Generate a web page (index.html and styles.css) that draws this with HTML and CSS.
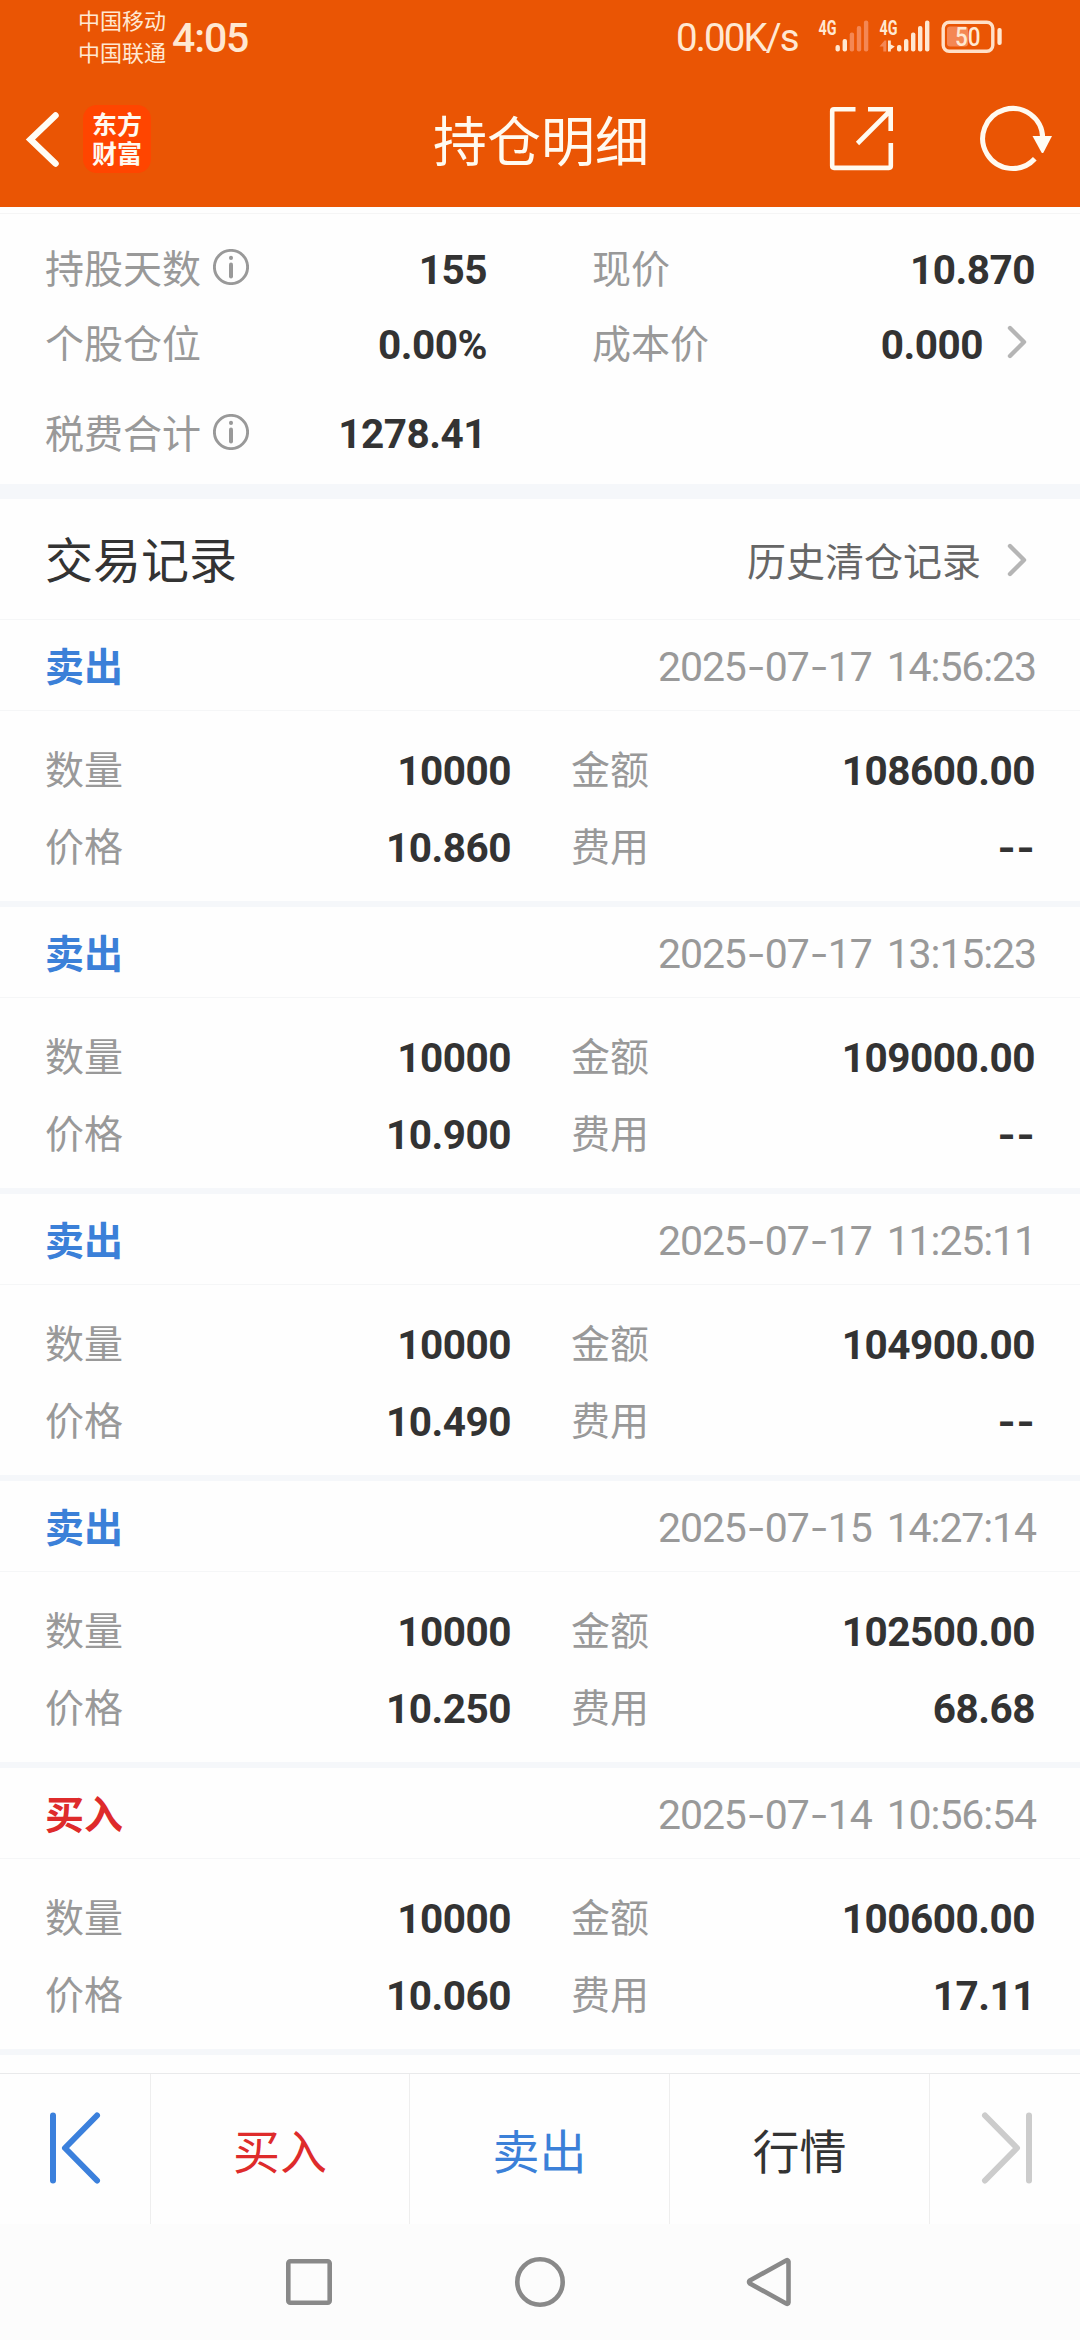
FILE: index.html
```html
<!DOCTYPE html>
<html lang="zh-CN">
<head>
<meta charset="utf-8">
<title>持仓明细</title>
<link rel="stylesheet" href="styles.css">
</head>
<body>
<div class="screen">
  <header class="top">
    <div class="status">
      <div class="carriers"><span>中国移动</span><span>中国联通</span></div>
      <span class="clock">4:05</span>
      <span class="speed">0.00K/s</span>
      <svg class="signals" width="196" height="40" viewBox="812 16 196 40">
        <g class="net"><text x="818.5" y="34.5" textLength="18" lengthAdjust="spacingAndGlyphs">4G</text><text x="879.5" y="34.5" textLength="18" lengthAdjust="spacingAndGlyphs">4G</text></g>
        <g class="on">
          <rect x="835.5" y="45" width="4.4" height="6.5" rx="2"/><rect x="842.6" y="39" width="4.4" height="12.5" rx="2"/>
          <rect x="897" y="45" width="4.4" height="6.5" rx="2"/><rect x="904" y="39" width="4.4" height="12.5" rx="2"/>
          <rect x="911" y="32.5" width="4.4" height="19" rx="2"/><rect x="918" y="26" width="4.4" height="25.5" rx="2"/><rect x="925" y="20.5" width="4.4" height="31" rx="2"/>
          <path d="M888 40.500h2.800v4l4 2-4 3v2h-2.800z"/>
        </g>
        <g class="off">
          <rect x="849.700" y="32.500" width="4.400" height="19" rx="2"/><rect x="856.800" y="26" width="4.400" height="25.500" rx="2"/><rect x="863.900" y="20.500" width="4.400" height="31" rx="2"/>
          <path d="M886.300 51.500h-3v-5h-3.800l5-6h1.800z"/>
          <rect x="947" y="26.500" width="21" height="20" rx="3"/>
        </g>
        <rect class="shell" x="943.200" y="22.200" width="49.600" height="29" rx="6"/>
        <rect class="on" x="997.400" y="28" width="4.300" height="17" rx="2"/>
        <text class="pct" x="955" y="46" textLength="25.500" lengthAdjust="spacingAndGlyphs">50</text>
      </svg>
    </div>
    <div class="bar">
      <svg class="back" width="40" height="64" viewBox="22 107 40 64"><path d="M55.500 115.500 30.500 139.500 55.500 163.500"/></svg>
      <div class="logo">东方财富</div>
      <h1>持仓明细</h1>
      <svg class="share" width="70" height="70" viewBox="825 105 70 70"><path d="M853.500 110.300H832q-1.800 0-1.800 1.800v55q0 1.800 1.800 1.800h55q1.800 0 1.800-1.800V144M866 110.300h22.700V132M855.500 144.500 888 112"/></svg>
      <svg class="reload" width="78" height="70" viewBox="976 104 78 70"><path class="arc" d="M1040.700 138A30 30 0 1 0 1032.800 158.800"/><path class="tip" d="M1030.500 136h19.500l-8.500 16.500q-1 1.200-2 0z"/></svg>
    </div>
  </header>

  <section class="summary">
    <div class="sum-row r1"><span class="label">持股天数</span><svg class="info" width="36" height="36" viewBox="0 0 36 36"><circle cx="18" cy="18" r="16.600"/><path d="M18 15.500v12"/><path d="M18 8.800v.1"/></svg><b class="num">155</b><span class="label second">现价</span><b class="num last">10.870</b></div>
    <div class="sum-row r2"><span class="label">个股仓位</span><b class="num">0.00%</b><span class="label second">成本价</span><b class="num last">0.000</b><svg class="chev" width="26" height="36" viewBox="0 0 26 36"><path d="M4 4 18 18 4 32"/></svg></div>
    <div class="sum-row r3"><span class="label">税费合计</span><svg class="info" width="36" height="36" viewBox="0 0 36 36"><circle cx="18" cy="18" r="16.600"/><path d="M18 15.500v12"/><path d="M18 8.800v.1"/></svg><b class="num">1278.41</b></div>
  </section>

  <div class="records-head"><h2>交易记录</h2><span class="history">历史清仓记录</span><svg class="chev" width="26" height="36" viewBox="0 0 26 36"><path d="M4 4 18 18 4 32"/></svg></div>

  <main class="records">
    <article class="record">
      <div class="record-head"><span class="side sell">卖出</span><time>2025<i>-</i>07<i>-</i>17 14:56:23</time></div>
      <div class="grid"><span class="label">数量</span><b class="num">10000</b><span class="label">金额</span><b class="num">108600.00</b><span class="label">价格</span><b class="num">10.860</b><span class="label">费用</span><b class="num dash"><i>-</i><i>-</i></b></div>
    </article>
    <article class="record">
      <div class="record-head"><span class="side sell">卖出</span><time>2025<i>-</i>07<i>-</i>17 13:15:23</time></div>
      <div class="grid"><span class="label">数量</span><b class="num">10000</b><span class="label">金额</span><b class="num">109000.00</b><span class="label">价格</span><b class="num">10.900</b><span class="label">费用</span><b class="num dash"><i>-</i><i>-</i></b></div>
    </article>
    <article class="record">
      <div class="record-head"><span class="side sell">卖出</span><time>2025<i>-</i>07<i>-</i>17 11:25:11</time></div>
      <div class="grid"><span class="label">数量</span><b class="num">10000</b><span class="label">金额</span><b class="num">104900.00</b><span class="label">价格</span><b class="num">10.490</b><span class="label">费用</span><b class="num dash"><i>-</i><i>-</i></b></div>
    </article>
    <article class="record">
      <div class="record-head"><span class="side sell">卖出</span><time>2025<i>-</i>07<i>-</i>15 14:27:14</time></div>
      <div class="grid"><span class="label">数量</span><b class="num">10000</b><span class="label">金额</span><b class="num">102500.00</b><span class="label">价格</span><b class="num">10.250</b><span class="label">费用</span><b class="num">68.68</b></div>
    </article>
    <article class="record">
      <div class="record-head"><span class="side buy">买入</span><time>2025<i>-</i>07<i>-</i>14 10:56:54</time></div>
      <div class="grid"><span class="label">数量</span><b class="num">10000</b><span class="label">金额</span><b class="num">100600.00</b><span class="label">价格</span><b class="num">10.060</b><span class="label">费用</span><b class="num">17.11</b></div>
    </article>
  </main>

  <nav class="actions">
    <span class="cell first"><svg width="60" height="80" viewBox="0 0 60 80"><path d="M8 7.500v65M52 7.500 20 40 52 72.500"/></svg></span>
    <span class="cell buy">买入</span>
    <span class="cell sell">卖出</span>
    <span class="cell quote">行情</span>
    <span class="cell next"><svg width="60" height="80" viewBox="0 0 60 80"><path d="M52 7.500v65M8 7.500 40 40 8 72.500"/></svg></span>
  </nav>

  <footer class="system">
    <svg width="50" height="54" viewBox="0 0 50 54"><rect x="4.300" y="6.300" width="41.400" height="41.400" rx="2"/></svg>
    <svg width="54" height="54" viewBox="0 0 54 54"><circle cx="27" cy="27" r="22.700"/></svg>
    <svg width="50" height="54" viewBox="0 0 50 54"><path d="M44.500 6.500v41q-.3 2-2.400 1L6 28.600q-2-1.600 0-3.200L42.100 5.500q2.100-1 2.400 1z"/></svg>
  </footer>
</div>
</body>
</html>
```
FILE: styles.css
```css
* { box-sizing: border-box; margin: 0; padding: 0; }
body { background: #fff; }
svg { display: block; flex: none; fill: none; }

.screen {
  width: 1080px;
  height: 2340px;
  display: flex;
  flex-direction: column;
  overflow: hidden;
  background: #fefefe;
  color: #333;
  font-family: "Noto Sans CJK SC", sans-serif;
}

/* Header */
.top { height: 207px; background: #ea5504; color: #fffaf0; flex: none; }
.status { height: 76px; display: flex; align-items: center; padding-left: 78px; color: #ffe8d2; }
.carriers { width: 92px; display: flex; flex-direction: column; font-size: 22px; line-height: 32px; margin-top: -6px; }
.clock { width: 504px; padding-left: 2px; font: 500 41px/44px Roboto, sans-serif; letter-spacing: -1.1px; }
.speed { width: 138px; padding-left: 2px; font: 38.5px/44px Roboto, sans-serif; letter-spacing: -1.9px; white-space: nowrap; }
.signals { margin-top: -4px; }
.net text { font: 700 20px Roboto, sans-serif; fill: #ffe8d2; }
.on { fill: #ffe8d2; }
.off { fill: #f69063; opacity: .85; }
.shell { stroke: #ffe0c8; stroke-width: 3.4; }
.pct { font: 500 25px Roboto, sans-serif; fill: #ffe8d2; }

.bar { height: 126px; display: flex; align-items: center; padding-left: 22px; }
.back { stroke: #fffdf5; stroke-width: 6.5; stroke-linecap: round; stroke-linejoin: miter; }
.logo {
  width: 68px; height: 68px; margin-left: 21px; padding: 4px 9px; border-radius: 14px;
  background: #ff4500; font-size: 25px; line-height: 28.5px; font-weight: 700;
}
.bar h1 { width: 217px; margin-left: 282px; font-size: 54px; line-height: 64px; font-weight: 400; color: #fffaf0; white-space: nowrap; }
.share { margin-left: 177px; stroke: #fffaf0; stroke-width: 4.6; }
.reload { margin-left: 81px; }
.arc { stroke: #fffaf0; stroke-width: 5; }
.tip { fill: #fffdf5; }

/* Shared text */
.label { font-size: 39px; line-height: 44px; color: #999; margin-top: -7px; font-weight: 400; white-space: nowrap; }
.num { font: 700 40.5px/44px Roboto, sans-serif; letter-spacing: -.5px; text-align: right; color: #333; }
.chev { stroke: #b5b5b5; stroke-width: 4.4; stroke-linecap: round; stroke-linejoin: round; }
.sell { color: #3b80d8; }
.buy { color: #de2b2b; }

/* Summary */
.summary { height: 292px; padding: 6px 0 0; border-bottom: 15px solid #f5f7fa; flex: none; }
.sum-row { display: grid; grid-template-columns: 168px 60px 214px 105px 391px 52px; align-items: center; padding-left: 45px; height: 75px; }
.r1 { height: 94px; padding-top: 18px; border-top: 1px solid #f5f5f5; }
.r3 { height: 104px; }
.sum-row .label { grid-column: 1; grid-row: 1; }
.info { grid-column: 2; grid-row: 1; stroke: #999; stroke-width: 2.9; stroke-linecap: round; margin-top: -5px; }
.info path { stroke-width: 4; }
.sum-row .num { grid-column: 2 / 4; grid-row: 1; }
.r3 .num { margin-right: 1px; }
.sum-row .second { grid-column: 5; }
.sum-row .last { grid-column: 5; }
.r1 .last { grid-column: 5 / 7; }
.r2 .chev { grid-column: 6; grid-row: 1; justify-self: end; margin: -5px 3px 0 0; }

/* Record list */
.records-head { height: 121px; border-bottom: 1px solid #f5f6f7; display: flex; align-items: center; padding: 0 48px 0 45px; flex: none; }
.records-head h2 { font-size: 48px; line-height: 56px; font-weight: 400; margin-top: -4px; flex: 1; }
.history { font-size: 39px; line-height: 44px; color: #666; }
.records-head .chev { margin: 2px 0 0 25px; }
.records { flex: none; }
.record { height: 287px; border-bottom: 6px solid #f5f7fa; }
.record-head { height: 91px; border-bottom: 1px solid #f5f6f7; display: flex; align-items: center; justify-content: space-between; padding: 3px 44px 0 45px; }
.side { font-size: 39px; line-height: 44px; font-weight: 700; margin-top: -6px; }
time { font: 41px/44px Roboto, sans-serif; letter-spacing: -1.1px; word-spacing: 6px; color: #999; }
time i { display: inline-block; width: 19px; text-align: center; font-style: normal; transform: scaleX(1.35); }
.grid { display: grid; grid-template-columns: 100px 366px 60px 100px 364px; grid-template-rows: 77px 77px; align-items: center; padding: 21px 0 0 45px; }
.grid .label:nth-of-type(2n) { grid-column: 4; }
.dash i { display: inline-block; width: 19px; text-align: center; font-style: normal; transform: scaleX(1.15); }

/* Bottom bars */
.actions { height: 151px; margin-top: 18px; border-top: 1px solid #e9eaeb; display: grid; grid-template-columns: 151px 259px 260px 260px 150px; flex: none; font-size: 47px; line-height: 56px; }
.cell { display: flex; align-items: center; justify-content: center; border-right: 1px solid #eee; padding-bottom: 1px; }
.cell:last-child { border: 0; }
.first, .next { padding-bottom: 3px; }
.next { padding-left: 4px; }
.cell svg { stroke-width: 6; stroke-linecap: round; stroke-linejoin: round; }
.first svg { stroke: #3b80dc; }
.next svg { stroke: #ccc; }
.quote { color: #333; }
.system { height: 116px; background: #fcfcfc; display: flex; align-items: center; padding-left: 284px; flex: none; }
.system svg { stroke: #898989; stroke-width: 4.600; }
.system svg:nth-child(2) { margin-left: 179px; }
.system svg:nth-child(3) { margin-left: 177px; }
```
